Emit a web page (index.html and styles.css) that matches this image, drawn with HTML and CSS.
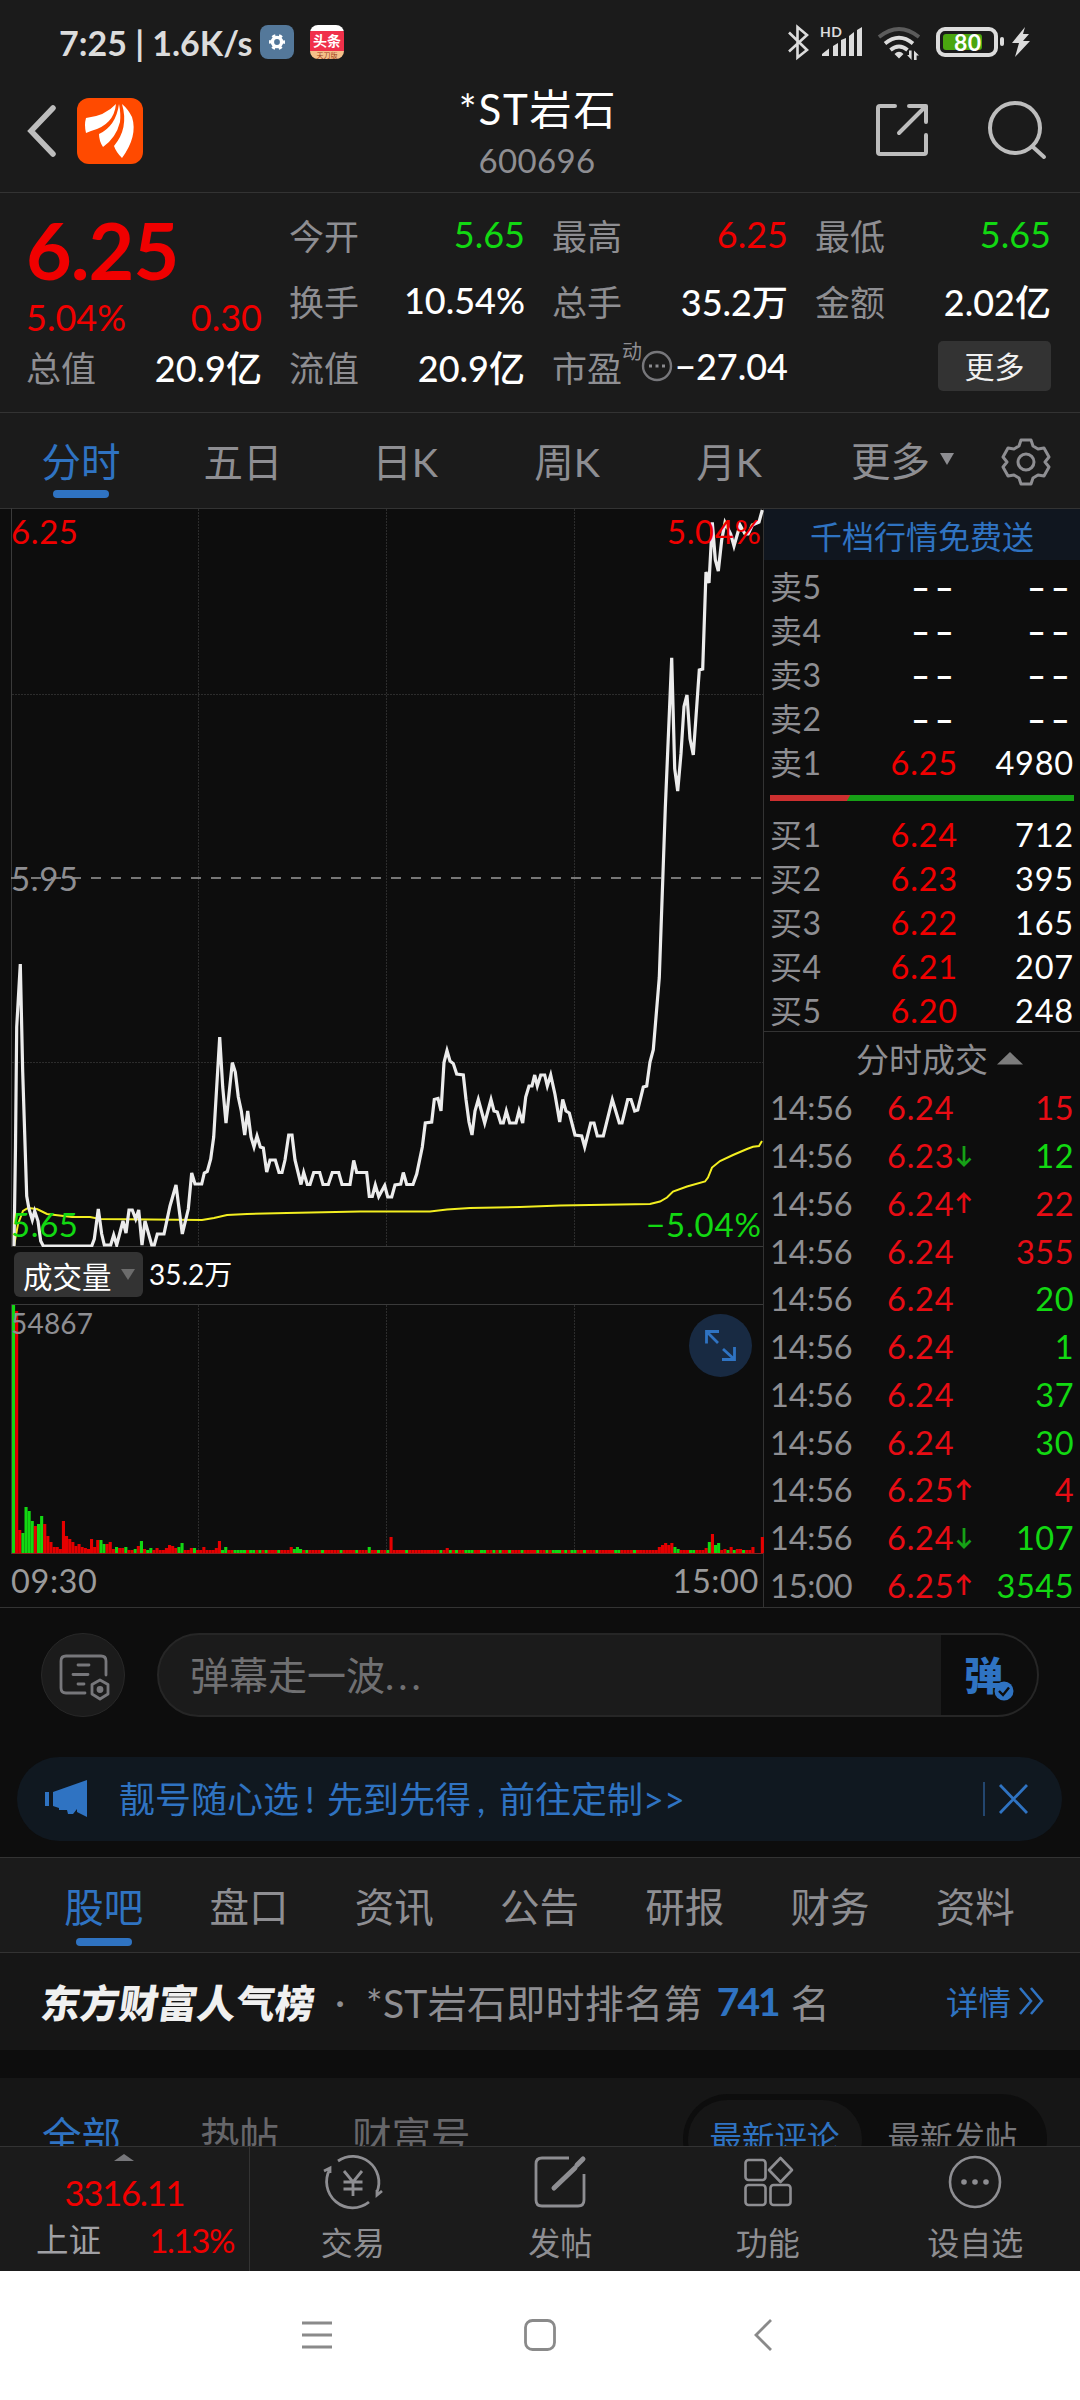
FILE: index.html
```
<!DOCTYPE html>
<html lang="zh-CN">
<head>
    <meta charset="UTF-8">
    <meta name="viewport" content="width=device-width, initial-scale=1.0">
    <title>*ST岩石 600696</title>

    <link rel="stylesheet" href="styles.css">
</head>
<body>

    <!-- 状态栏 -->
    <div class="status">
        <span class="status-text">7:25 | 1.6K/s</span>
        <svg class="app-gear" width="34" height="34" viewBox="0 0 34 34">
            <rect width="34" height="34" rx="8" fill="#54789a"/>
            <circle cx="17" cy="17" r="4.6" fill="none" stroke="#fff" stroke-width="3.4"/>
            <circle cx="17" cy="17" r="6.8" fill="none" stroke="#fff" stroke-width="2.4" stroke-dasharray="3.4 3.72" stroke-dashoffset="1.7"/>
        </svg>
        <div class="app-news"><b>头条</b><i>天刀版</i></div>
        <svg class="status-icons" width="250" height="40" viewBox="784 22 250 40">
            <path d="M789 32.5 L807 50 L797.5 57.5 V27 L807 35 L789 51.5" fill="none" stroke="#dcdcdc" stroke-width="2.6"/>
            <text class="hd" x="820" y="37" textLength="22">HD</text>
            <path d="M822 56 V54 L829 48.5 V56Z M833 56 V46 L838 43 V56Z M841 56 V40 L846 38 V56Z M849 56 V36 L854 32 V56Z M857 56 V30 L862 27 V56Z" fill="#dcdcdc"/>
            <g fill="none" stroke="#dcdcdc" stroke-width="3.8">
                <path d="M879 37 Q899 21 919 37" stroke="#5c5c5c"/>
                <path d="M885 43.5 Q899 32 913 43.5"/>
                <path d="M890.5 50 Q899 43 907.5 50"/>
            </g>
            <path d="M894.5 54 Q899 49.5 903.5 54 L899 58.5Z M909 50.5 h2.6 v9.5 l-4.5 -5 h1.9Z M914 60 v-9.5 l5 5 h-2.4 v4.5Z" fill="#dcdcdc"/>
            <rect x="938" y="29" width="58" height="26" rx="7" fill="none" stroke="#dcdcdc" stroke-width="4"/>
            <rect x="943" y="34" width="39" height="16" rx="3" fill="#4aa60f"/>
            <rect x="1000" y="37" width="4" height="9" rx="2" fill="#dcdcdc"/>
            <text class="battery" x="954" y="50.5" textLength="27">80</text>
            <path d="M1025 27 L1012 43 H1019 L1015 57 L1030 41 H1023 L1029 34 H1023Z" fill="#dcdcdc"/>
        </svg>
    </div>

    <!-- 标题栏 -->
    <div class="header">
        <svg class="back" width="32" height="54" viewBox="0 0 32 54"><path d="M27 4 L5 27 L27 50" fill="none" stroke="#bdbdbd" stroke-width="5.5" stroke-linecap="round"/></svg>
        <svg class="logo" width="66" height="66" viewBox="0 0 66 66">
            <rect width="66" height="66" rx="12" fill="#ff4a00"/>
            <path d="M9 20 Q28 18 39 6 Q37 27 14 33 L9 35 Q7 27 9 20Z" fill="#fff"/>
            <path d="M42 6 Q44 16 43 24 Q39 40 26 49 Q22 43 22 36 Q39 28 42 6Z" fill="#fff"/>
            <path d="M45 6 Q51 11 55 19 Q61 38 45 60 Q39 54 37 48 Q52 30 45 6Z" fill="#fff"/>
        </svg>
        <div class="title">
            <div class="name">*ST岩石</div>
            <div class="code">600696</div>
        </div>
        <svg class="head-icons" width="180" height="66" viewBox="870 98 180 66" fill="none" stroke="#bdbdbd" stroke-width="4" stroke-linecap="round" stroke-linejoin="round">
            <path d="M895 106 H880 Q878 106 878 108 V152 Q878 154 880 154 H924 Q926 154 926 152 V135 M909 106 H926 V122 M924 108 L899 133"/>
            <circle cx="1015" cy="128" r="25"/>
            <path d="M1033 147 L1044 157"/>
        </svg>
    </div>

    <!-- 报价 -->
    <div class="quote">
        <div class="col">
            <div class="price">6.25</div>
            <div class="cell change red"><span>5.04%</span><span>0.30</span></div>
            <div class="cell"><label>总值</label><b>20.9亿</b></div>
        </div>
        <div class="col">
            <div class="cell"><label>今开</label><span class="green">5.65</span></div>
            <div class="cell"><label>换手</label><b>10.54%</b></div>
            <div class="cell"><label>流值</label><b>20.9亿</b></div>
        </div>
        <div class="col">
            <div class="cell"><label>最高</label><span class="red">6.25</span></div>
            <div class="cell"><label>总手</label><b>35.2万</b></div>
            <div class="cell">
                <label>市盈<sup>动</sup></label>
                <svg class="tip" width="32" height="32" viewBox="0 0 32 32"><circle cx="16" cy="16" r="14" fill="none" stroke="#77777b" stroke-width="2.4"/><path d="M8 14.5h3v3h-3z M14.5 14.5h3v3h-3z M21 14.5h3v3h-3z" fill="#8a8a8e"/></svg>
                <b>−27.04</b>
            </div>
        </div>
        <div class="col">
            <div class="cell"><label>最低</label><span class="green">5.65</span></div>
            <div class="cell"><label>金额</label><b>2.02亿</b></div>
            <div class="cell"><a class="more-btn">更多</a></div>
        </div>
    </div>

    <!-- 周期切换 -->
    <div class="period">
        <div class="p-item active">分时</div>
        <div class="p-item">五日</div>
        <div class="p-item">日K</div>
        <div class="p-item">周K</div>
        <div class="p-item">月K</div>
        <div class="p-more">更多<svg width="14" height="12" viewBox="0 0 14 12"><path d="M0 0H14L7 12Z" fill="#8e8e92"/></svg></div>
        <svg class="p-gear" width="50" height="50" viewBox="0 0 50 50" fill="none" stroke="#8e8e92" stroke-width="3" stroke-linejoin="round">
            <path d="M20 3 H30 L32 9 L37 12 L43 11 L48 20 L44 25 L48 30 L43 39 L37 38 L32 41 L30 47 H20 L18 41 L13 38 L7 39 L2 30 L6 25 L2 20 L7 11 L13 12 L18 9Z"/>
            <circle cx="25" cy="25" r="8"/>
        </svg>
    </div>

    <div class="main">
        <!-- 分时图 -->
        <div class="chart">
            <svg class="price-chart" width="764" height="739" viewBox="0 508 764 739">
                <path class="frame" d="M11.5 508V1246.5H763"/>
                <path class="grid" d="M198.5 509V1246 M386.5 509V1246 M574.5 509V1246 M12 694.5H763 M12 1062.5H763"/>
                <path class="middle" d="M11 878H763"/>
                <polyline class="avg" points="14,1246 18,1224 23,1211 28,1208 37,1209 47,1214 72,1217 90,1217 100,1219 202,1220 214,1218 227,1215 247,1214 287,1213 360,1211.5 430,1211.5 447,1209.5 470,1208 520,1207 560,1205.5 650,1204 660,1201.5 667,1197.5 673,1191.5 687,1186.5 705,1181.5 708,1177.5 712,1167.6 720,1161 733,1155 747,1149 753,1146.7 759,1146 762,1141"/>
                <polyline class="line" points="14,1246 15.5,1147 16.7,1027 20.3,964 22.7,1072 26.7,1196 29,1209 32.3,1220 34.7,1211 38,1221 40.7,1241 43.3,1246 91.7,1246 94.3,1239 98.3,1209 101.7,1234 104.3,1245 110.7,1245 113.7,1235 116.7,1245 123,1221 126,1233 129,1210 132.3,1210 135.7,1219 138.7,1210 142,1245 145,1221 151.7,1245 154.3,1245 157.3,1234 164,1234 170,1206 176,1185 182.3,1234 188.3,1209 191.7,1173 195,1184 201.7,1184 204.3,1173 207.3,1171.5 210.7,1159 213.7,1137 216.7,1087 219.7,1037 222.7,1087 226,1123 232.3,1062.6 235.3,1072 238.3,1097 241.3,1111 244.7,1135 247.7,1111 251,1137 254,1147 257,1136 260.3,1147 263.3,1148 266.7,1172 270,1160 275.3,1160 279,1172.5 282,1172.5 285,1160 288.7,1135 292,1135 295,1160 301,1184.5 303.7,1172.5 307.3,1184.5 310,1184.5 313.7,1172.5 319.7,1172.5 323,1184.5 328.3,1184.5 332.3,1172.5 338.7,1172.5 342,1184.5 350,1184.5 353.7,1160.5 356.7,1172.5 366.7,1172.5 369.3,1196.5 372.3,1196.5 375.3,1185 378.7,1196.5 384.7,1185.5 387.7,1197 391.7,1197 395,1185 400.7,1184 403.3,1172.5 406.7,1184.5 413,1184.5 416.7,1174 422.3,1147 425.3,1123 431.7,1122 434.3,1099.5 438,1098.5 441,1111 444,1062.6 447,1050.7 450,1061 453.3,1063.6 456.7,1074 463.3,1075 466,1099.5 469,1122 472,1135 475,1111 478.3,1099.5 484.7,1123 491,1099.5 494,1111 497.3,1112 500.7,1123 503.3,1123 506.3,1111 509.7,1123 516,1123 519,1111 522.7,1123 525.7,1097 529,1086 532,1086 534.7,1075 537.3,1086 540.7,1075 544.7,1075 547.3,1086 550.7,1075 555,1094.5 559.7,1122 562.7,1099.5 566,1111 569.3,1113 575,1135 581.7,1136 584.7,1147 590.7,1123 594,1123 597.3,1136 603.3,1136 612.3,1099.5 619.3,1123 622,1123 627.7,1099.5 631,1099.5 634.7,1111 637.7,1110 643.3,1087 646.7,1086 650,1062 653.3,1049.7 659.3,977.5 665.3,808 671.7,657.7 674.7,768.6 677.7,791 681,753.7 684,706.4 687,695 690,738.8 693.3,755 699.3,670 702.7,669 706,572 709,583 712.3,522.4 715.3,559.7 718.3,571 721.7,540 725,522.4 730.7,534 734,546 740,525 745,534 748.3,534 752.3,525 759,522 762.3,510"/>
                <text class="red" x="11" y="543.5" textLength="67">6.25</text>
                <text class="red" x="667" y="543.5" textLength="94">5.04%</text>
                <text class="gray" x="11" y="890.5" textLength="67">5.95</text>
                <text class="green" x="11" y="1237" textLength="67">5.65</text>
                <text class="green" x="646" y="1237" textLength="115">−5.04%</text>
            </svg>
            <div class="vol-bar">
                <div class="vol-select">成交量<svg width="14" height="11" viewBox="0 0 14 11"><path d="M0 0H14L7 11Z" fill="#6c6c6c"/></svg></div>
                <span>35.2万</span>
            </div>
            <svg class="vol-chart" width="764" height="250" viewBox="0 1304 764 250">
                <path class="frame" d="M11.5 1554V1304.5H763"/>
                <path class="grid" d="M198.5 1305V1553 M386.5 1305V1553 M574.5 1305V1553"/>
                <g id="bars"></g>
                <path d="M12 1553.5H763" stroke="#8c2020"/>
                <text class="gray small" x="11" y="1333.5" textLength="82">54867</text>
                <circle cx="720.5" cy="1345.5" r="31.5" fill="#182a42"/>
                <path d="M718 1343 L707 1332 M706.5 1343.5 V1331.5 H719 M723 1349 L734 1359 M722 1359.5 H734.5 V1347" fill="none" stroke="#2f73c2" stroke-width="2.8"/>
            </svg>
            <div class="times"><span>09:30</span><span>15:00</span></div>
        </div>

        <!-- 盘口 -->
        <div class="side">
            <div class="promo">千档行情免费送</div>
            <div class="book">
                <div class="row"><label>卖5</label><span class="dash">--</span><b class="dash">--</b></div>
                <div class="row"><label>卖4</label><span class="dash">--</span><b class="dash">--</b></div>
                <div class="row"><label>卖3</label><span class="dash">--</span><b class="dash">--</b></div>
                <div class="row"><label>卖2</label><span class="dash">--</span><b class="dash">--</b></div>
                <div class="row"><label>卖1</label><span>6.25</span><b>4980</b></div>
            </div>
            <div class="ratio"></div>
            <div class="book buy">
                <div class="row"><label>买1</label><span>6.24</span><b>712</b></div>
                <div class="row"><label>买2</label><span>6.23</span><b>395</b></div>
                <div class="row"><label>买3</label><span>6.22</span><b>165</b></div>
                <div class="row"><label>买4</label><span>6.21</span><b>207</b></div>
                <div class="row"><label>买5</label><span>6.20</span><b>248</b></div>
            </div>
            <div class="tick-title">分时成交<svg width="26" height="13" viewBox="0 0 26 13"><path d="M0 12.5L13 0L26 12.5Z" fill="#7c7c7c"/></svg></div>
            <div class="ticks" id="ticks"></div>
        </div>
    </div>

    <!-- 弹幕 -->
    <div class="danmu">
        <div class="dm-set">
            <svg width="84" height="84" viewBox="0 0 84 84" fill="none" stroke="#77777b" stroke-width="2.8" stroke-linecap="round">
                <path d="M43 59 H24 Q19 59 19 54 V27 Q19 22 24 22 H59 Q64 22 64 27 V41 M36 31 H47 M31 40.5 H46 M36 50 H42"/>
                <path d="M58 46 L66 50.5 V60 L58 65 L50 60 V50.5Z" stroke-linejoin="round"/>
                <circle cx="58" cy="55.5" r="2" fill="#77777b"/>
            </svg>
        </div>
        <div class="dm-input">
            <span>弹幕走一波<i>...</i></span>
            <div class="dm-switch"><b>弹</b><svg class="dm-check" width="20" height="20" viewBox="0 0 20 20"><circle cx="10" cy="10" r="9.5" fill="#2f73c2"/><path d="M5 10L9 14L15 6.5" fill="none" stroke="#0d0d0d" stroke-width="2.4"/></svg></div>
        </div>
    </div>

    <div class="notice">
        <svg width="42" height="38" viewBox="0 0 42 38" fill="#2f73c2"><path d="M0 12h4v14H0z M8 12 L42 0 V37 L32 32 V29 L28 34 H23 L22 30 H14 V28 L8 26Z"/></svg>
        <span class="notice-text">靓号随心选<i>!</i>先到先得<i>,</i>前往定制&gt;&gt;</span>
        <svg class="close" width="46" height="36" viewBox="0 0 46 36"><path d="M1 1V35" stroke="#2a568a" stroke-width="1.5"/><path d="M17 4L44 32M44 4L17 32" stroke="#2f73c2" stroke-width="2.8"/></svg>
    </div>

    <!-- 资讯栏目 -->
    <div class="tabs">
        <div class="tab active">股吧</div>
        <div class="tab">盘口</div>
        <div class="tab">资讯</div>
        <div class="tab">公告</div>
        <div class="tab">研报</div>
        <div class="tab">财务</div>
        <div class="tab">资料</div>
    </div>

    <div class="rank">
        <span class="rank-logo">东方财富人气榜</span>
        <span class="dot">·</span>
        <span class="rank-text">*ST岩石即时排名第</span>
        <b>741</b>
        <span>名</span>
        <span class="detail">详情<svg width="26" height="30" viewBox="0 0 26 30"><path d="M2 2L13 15L2 28M13 2L24 15L13 28" fill="none" stroke="#2f73c2" stroke-width="2.6"/></svg></span>
    </div>

    <div class="posts">
        <span class="active">全部</span>
        <span>热帖</span>
        <span>财富号</span>
        <div class="sort"><div class="on">最新评论</div><div>最新发帖</div></div>
    </div>

    <!-- 底部工具栏 -->
    <div class="toolbar">
        <div class="index">
            <svg width="20" height="7" viewBox="0 0 20 7"><path d="M0 7L10 0L20 7Z" fill="#77777b"/></svg>
            <div class="index-num">3316.11</div>
            <div class="index-row"><span>上证</span><b>1.13%</b></div>
        </div>
        <div class="tool">
            <svg width="60" height="56" viewBox="0 0 60 56" fill="none" stroke="#8e8e92" stroke-width="2.8">
                <path d="M15 7 A26 26 0 0 1 54 38 M46 48 A26 26 0 0 1 7 15 M1 17L7 14V19 M59 37L54 41V36"/>
                <path d="M21 17L30 28L39 17M30 28V42M20.5 28H39.5M20.5 35H39.5"/>
            </svg>
            交易
        </div>
        <div class="tool">
            <svg width="60" height="56" viewBox="0 0 60 56" fill="none" stroke="#8e8e92" stroke-width="2.8">
                <path d="M39 4H12Q6 4 6 10V46Q6 52 12 52H48Q54 52 54 46V20" />
                <path d="M53 5L47 11M45 14L24 34" stroke-width="5" stroke-linecap="round"/>
            </svg>
            发帖
        </div>
        <div class="tool">
            <svg width="60" height="56" viewBox="0 0 60 56" fill="none" stroke="#8e8e92" stroke-width="2.6">
                <rect x="7.5" y="6" width="20" height="20" rx="3"/><rect x="7.5" y="31" width="20" height="20" rx="3"/><rect x="32.5" y="31" width="20" height="20" rx="3"/>
                <path d="M42.5 4L54 16L42.5 28L31 16Z" stroke-linejoin="round"/>
            </svg>
            功能
        </div>
        <div class="tool">
            <svg width="60" height="56" viewBox="0 0 60 56"><circle cx="30" cy="28" r="25" fill="none" stroke="#8e8e92" stroke-width="2.6"/><g fill="#8e8e92"><circle cx="19" cy="28" r="2.8"/><circle cx="30" cy="28" r="2.8"/><circle cx="41" cy="28" r="2.8"/></g></svg>
            设自选
        </div>
    </div>

    <!-- 系统导航 -->
    <div class="sysnav">
        <svg width="34" height="34" viewBox="0 0 34 34"><path d="M2 5H32M2 17H32M2 29H32" stroke="#8a8a8a" stroke-width="2.8"/></svg>
        <svg width="34" height="34" viewBox="0 0 34 34"><rect x="2.5" y="2.5" width="29" height="29" rx="7" fill="none" stroke="#8a8a8a" stroke-width="2.8"/></svg>
        <svg width="34" height="34" viewBox="0 0 34 34"><path d="M25 2L10 17L25 32" fill="none" stroke="#8a8a8a" stroke-width="2.8"/></svg>
    </div>

    <script src="script.js"></script>
</body>
</html>
```
FILE: styles.css
```
/*初始化*/
*{
    box-sizing: border-box;
}
body{
    margin: 0;
    width: 1080px;
    height: 2400px;
    overflow: hidden;
    background: #0d0d0d;
    color: #8e8e92;
    font-family: Lato, "Noto Sans CJK SC", sans-serif;
    font-size: 35px;
}
svg{
    display: block;
    flex: none;
}
b{
    font-weight: 400;
    color: #fff;
}
i{
    font-style: normal;
}
.red{
    color: #f00000;
    fill: #f00000;
}
.green{
    color: #12d812;
    fill: #12d812;
}
.gray{
    fill: #8e8e92;
}

/*状态栏*/
.status{
    display: flex;
    align-items: center;
    height: 84px;
    padding-left: 59px;
    background: #1b1b1b;
}
.status-text{
    width: 201px;
    font-size: 34px;
    font-weight: 700;
    color: #dcdcdc;
    white-space: nowrap;
}
.app-news{
    width: 34px;
    height: 34px;
    margin-left: 16px;
    border-radius: 8px;
    overflow: hidden;
    background: linear-gradient(#fff 6px, #f0304a 6px, #f0304a 26px, #f5c08a 26px);
    text-align: center;
}
.app-news b{
    display: block;
    margin-top: 6px;
    font-size: 14px;
    font-weight: 700;
    line-height: 20px;
}
.app-news i{
    display: block;
    font-size: 7px;
    line-height: 8px;
    color: #a04020;
}
.status-icons{
    margin-left: 440px;
}
.hd{
    font-size: 14px;
    font-weight: 700;
    fill: #dcdcdc;
}
.battery{
    font-size: 23px;
    font-weight: 700;
    fill: #fff;
}

/*标题栏*/
.header{
    display: flex;
    height: 109px;
    background: #1b1b1b;
    border-bottom: 1px solid #333;
}
.back{
    margin: 20px 0 0 26px;
}
.logo{
    margin: 14px 0 0 19px;
}
.title{
    width: 190px;
    margin-left: 299px;
    text-align: center;
}
.name{
    margin-left: 2px;
    font-size: 42px;
    line-height: 50px;
    color: #fff;
    letter-spacing: 1.8px;
    white-space: nowrap;
}
.code{
    font-size: 33px;
    line-height: 53px;
    letter-spacing: 0.4px;
}
.head-icons{
    margin: 14px 0 0 238px;
}

/*报价*/
.quote{
    display: grid;
    grid-template-columns: repeat(4, 235px);
    column-gap: 28px;
    height: 220px;
    padding: 8px 28px 0 26px;
    background: #1b1b1b;
    border-bottom: 1px solid #333;
}
.cell{
    display: flex;
    justify-content: space-between;
    align-items: center;
    height: 66px;
    white-space: nowrap;
}
.cell span,.cell b{
    margin-right: -1px;
    font-size: 36px;
}
.cell b{
    font-weight: 500;
}
.cell .tip{
    margin-left: -4px;
}
.price{
    height: 90px;
    margin-bottom: -8px;
    font-size: 79px;
    font-weight: 700;
    line-height: 97px;
    letter-spacing: -1px;
    color: #f00000;
}
.cell.change{
    height: 50px;
    margin-top: 8px;
    margin-bottom: -8px;
    padding-top: 2px;
}
.cell sup{
    font-size: 20px;
    line-height: 0;
    vertical-align: 23px;
}
.more-btn{
    width: 113px;
    height: 50px;
    margin: 0 -1px 0 auto;
    border-radius: 5px;
    background: #333;
    color: #f0f0f0;
    font-size: 30px;
    line-height: 50px;
    text-align: center;
}

/*周期切换*/
.period{
    display: flex;
    height: 96px;
    background: #1b1b1b;
    border-bottom: 1px solid #333;
    font-size: 39.5px;
    line-height: 97px;
}
.p-item{
    position: relative;
    width: 162px;
    text-align: center;
}
.active{
    color: #2f73c2;
}
.p-item.active::after,.tab.active::after{
    content: "";
    position: absolute;
    left: 50%;
    bottom: 10px;
    width: 56px;
    height: 8px;
    margin-left: -28px;
    border-radius: 4px;
    background: #2f73c2;
}
.p-more{
    display: flex;
    align-items: center;
    width: 150px;
    padding-left: 41px;
}
.p-more svg{
    margin: 0 0 4px 10px;
}
.p-gear{
    margin: 24px 0 0 41px;
}

/*分时图*/
.main{
    display: flex;
    height: 1099px;
    border-bottom: 1px solid #333;
}
.chart{
    width: 764px;
    border-right: 1px solid #333;
}
.price-chart{
    margin-top: -1px;
}
.frame{
    fill: none;
    stroke: #3a3a3a;
}
.grid{
    stroke: #2c2c2c;
    stroke-dasharray: 2 1;
}
.middle{
    stroke: #9a9a9a;
    stroke-width: 1.6;
    stroke-dasharray: 10 10;
}
.avg{
    fill: none;
    stroke: #f2ee20;
    stroke-width: 2;
}
.line{
    fill: none;
    stroke: #ececec;
    stroke-width: 3.2;
}
.chart text{
    font-size: 33px;
}
.chart text.small{
    font-size: 28px;
}
.vol-bar{
    display: flex;
    align-items: center;
    height: 57px;
    padding: 0 0 2px 14px;
    font-size: 28px;
    color: #fff;
}
.vol-bar > span{
    padding-bottom: 4px;
}
.vol-select{
    display: flex;
    align-items: center;
    width: 129px;
    height: 45px;
    margin-right: 6px;
    padding-left: 9px;
    border-radius: 6px;
    background: #333;
    font-size: 29.5px;
}
.vol-select svg{
    margin-left: 9px;
}
.times{
    display: flex;
    justify-content: space-between;
    padding: 0 4px 0 11px;
    font-size: 32.5px;
    line-height: 54px;
    color: #9a9a9a;
    letter-spacing: 0.6px;
}

/*盘口*/
.side{
    width: 316px;
}
.promo{
    height: 51px;
    background: #10161f;
    color: #2f73c2;
    font-size: 32px;
    line-height: 55px;
    text-align: center;
}
.book{
    padding: 5px 6px 0 6px;
}
.row{
    display: grid;
    grid-template-columns: 91px 97px 1fr;
    align-items: center;
    height: 44px;
    font-size: 32.5px;
    line-height: 44px;
}
.row label{
    font-size: 32px;
    letter-spacing: 0.6px;
}
.row span{
    color: #f00000;
    letter-spacing: 0.8px;
    text-align: right;
}
.row b{
    letter-spacing: 0.8px;
    text-align: right;
}
.row .dash{
    color: #fff;
    font-size: 40px;
    letter-spacing: 3px;
    transform: scaleX(1.32);
    transform-origin: right;
}
.ratio{
    height: 6px;
    margin: 10px 6px 0;
    background: linear-gradient(120deg, #cc2f2f 69px, #16a016 70px);
}
.buy{
    height: 231px;
    padding-top: 12px;
    border-bottom: 1px solid #333;
}
.tick-title{
    display: flex;
    align-items: center;
    height: 52px;
    padding-left: 92px;
    font-size: 33px;
}
.tick-title svg{
    margin-left: 9px;
}
.tick{
    display: flex;
    align-items: center;
    height: 47.75px;
    padding: 0 6px 0 6px;
    font-size: 32.5px;
    color: #8e8e92;
}
.tick span{
    letter-spacing: 0.8px;
}
.tick .t{
    width: 117px;
    letter-spacing: -0.2px;
}
.tick .p{
    width: 69px;
    color: #e80c14;
}
.tick .n{
    flex: 1;
    text-align: right;
    letter-spacing: 0.5px;
}
.tick .up{
    color: #e80c14;
}
.tick .down{
    color: #12d812;
}

/*弹幕*/
.danmu{
    display: flex;
    height: 149px;
    padding: 25px 0 0 41px;
}
.dm-set{
    width: 84px;
    height: 84px;
    border: 1px solid #282828;
    border-radius: 50%;
    background: #1b1b1b;
}
.dm-input{
    display: flex;
    width: 882px;
    height: 84px;
    margin-left: 32px;
    border: 2px solid #262626;
    border-radius: 42px;
    overflow: hidden;
    background: #1b1b1b;
    color: #707072;
    font-size: 39px;
    line-height: 80px;
}
.dm-input span{
    width: 782px;
    padding-left: 31px;
}
.dm-input i{
    letter-spacing: 4px;
}
.dm-switch{
    position: relative;
    flex: 1;
    padding-left: 23px;
    background: #0d0d0d;
}
.dm-switch b{
    color: #2f73c2;
    font-weight: 900;
}
.dm-check{
    position: absolute;
    left: 53px;
    top: 46px;
}
.notice{
    display: flex;
    align-items: center;
    height: 84px;
    margin: 0 18px 16px 17px;
    padding: 0 33px 0 28px;
    border-radius: 42px;
    background: #101820;
    color: #2f73c2;
}
.notice-text{
    margin-left: 32px;
    font-size: 36px;
    line-height: 84px;
    white-space: nowrap;
}
.notice-text i{
    display: inline-block;
    width: 28px;
    padding-left: 6px;
}
.close{
    margin-left: auto;
}

/*资讯栏目*/
.tabs{
    display: flex;
    height: 96px;
    padding: 0 32px 0 31px;
    border-top: 1px solid #333;
    border-bottom: 1px solid #333;
    background: #1b1b1b;
    font-size: 39.5px;
    line-height: 97px;
}
.tab{
    position: relative;
    flex: 1;
    text-align: center;
}
.tab.active::after{
    bottom: 6px;
}
.rank{
    display: flex;
    align-items: center;
    height: 97px;
    padding: 0 36px 2px 42px;
    background: #161616;
    font-size: 39px;
    white-space: nowrap;
}
.rank-logo{
    width: 272px;
    color: #f0f0f0;
    font-size: 39px;
    font-weight: 900;
    transform: skewX(-8deg);
}
.dot{
    width: 52px;
    text-align: center;
}
.rank-text{
    letter-spacing: 0.3px;
}
.rank b{
    margin: 0 12px 0 14px;
    color: #2f73c2;
    font-weight: 700;
    font-size: 39px;
    letter-spacing: -2px;
}
.detail{
    display: flex;
    align-items: center;
    margin-left: auto;
    color: #2f73c2;
    font-size: 32.5px;
}
.detail svg{
    margin-left: 7px;
}
.posts{
    display: flex;
    height: 68px;
    margin-top: 28px;
    padding-left: 42px;
    overflow: hidden;
    background: #161616;
    color: #66666a;
    font-size: 39.5px;
    line-height: 115px;
}
.posts span{
    margin-right: 79px;
}
.posts span:nth-child(2){
    margin-right: 73px;
}
.posts .active,.posts .on{
    color: #2f73c2;
}
.sort{
    display: flex;
    width: 364px;
    height: 90px;
    margin: 16px 0 0 133px;
    padding: 6px 5px;
    border-radius: 45px;
    background: #0d0d0d;
    font-size: 32.5px;
    line-height: 75px;
    color: #77777b;
    text-align: center;
    flex: none;
}
.sort div{
    width: 174px;
    height: 78px;
}
.sort div:last-child{
    width: 178px;
    padding-left: 4px;
}
.sort .on{
    border-radius: 39px;
    background: #161616;
}

/*底部工具栏*/
.toolbar{
    display: flex;
    height: 125px;
    border-top: 1px solid #333;
    background: #1b1b1b;
}
.index{
    width: 250px;
    border-right: 1px solid #333;
    color: #f00000;
}
.index svg{
    margin: 7px 0 0 114px;
}
.index-num{
    font-size: 34.5px;
    line-height: 46px;
    margin-top: 9px;
    text-align: center;
    letter-spacing: -1.2px;
}
.index-row{
    display: flex;
    justify-content: space-between;
    padding: 1px 15px 0 36px;
    font-size: 33px;
    line-height: 46px;
}
.index-row span{
    color: #a0a0a4;
    font-size: 32.5px;
}
.index-row b{
    color: #f00000;
    letter-spacing: -1.4px;
}
.tool{
    display: flex;
    flex: 1;
    flex-direction: column;
    align-items: center;
    padding: 7px 2px 0 0;
    font-size: 32px;
    line-height: 65px;
}

/*系统导航*/
.sysnav{
    display: flex;
    gap: 189px;
    height: 130px;
    padding: 47px 0 0 300px;
    background: #fff;
}
```
FILE: script.js
```
// 成交量: 高度(px), 负数为绿色
var bars = {
    0: -248, 1: 242, 2: 23, 3: -20, 4: -46, 5: -42, 6: -32, 7: 27, 8: -29, 9: -37,
    10: 29, 11: 17, 12: 11, 13: 6, 14: 6, 15: 4, 16: 32, 17: 17, 18: 14, 19: 11,
    20: 7, 21: 9, 22: 6, 23: 5, 24: 4, 25: 14, 26: 6, 27: 13, 28: -13, 29: -9,
    30: 9, 31: 11, 32: 4, 33: -6, 34: 5, 35: 5, 36: -6, 39: -4, 40: 7, 41: -12,
    42: 4, 43: -3, 44: -5, 46: 5, 49: 5, 50: 8, 51: 7, 52: 5, 53: -6, 54: -10,
    57: 5, 58: -5, 61: 6, 65: 5, 66: 12, 67: -3, 68: -6, 71: -3, 72: -3, 73: -3,
    74: -3, 76: -3, 77: -3, 79: -3, 81: -3, 85: -3, 89: 6, 90: -4, 91: -6, 92: -4,
    94: -3, 99: -3, 105: -3, 110: -3, 114: -6, 117: -3, 120: -3, 121: 16, 126: -3,
    137: -3, 139: 5, 140: -3, 142: -3, 145: -3, 146: -3, 147: -3, 150: -3, 151: -3,
    154: -3, 156: -3, 159: -3, 163: -3, 168: -3, 171: -3, 173: -3, 174: -3, 175: -3,
    177: -3, 179: -3, 180: -3, 183: -3, 187: -3, 193: -3, 194: -3, 199: -3,
    207: 6, 208: 8, 209: 10, 210: 8, 211: 10, 212: -6, 213: -4, 217: -3, 218: -3,
    222: 5, 223: -11, 224: 19, 225: -8, 226: -10, 228: 4, 229: -3, 230: 6, 231: -3,
    232: 4, 233: 4, 234: -3, 237: 6, 238: 0, 239: 0, 240: 16
};
var html = "";
for (var i = 0; i <= 240; i++) {
    var h = i in bars ? bars[i] : 3;
    var x = 12 + i * 3.12;
    html += '<rect x="' + x.toFixed(1) + '" y="' + (1553 - Math.abs(h)) + '" width="3.1" height="' + Math.abs(h) +
        '" fill="' + (h < 0 ? "#12d812" : "#e60000") + '"/>';
}
document.getElementById("bars").innerHTML = html;

// 分时成交: 时间, 价格, 箭头, 手数, 方向
var ticks = [
    ["14:56", "6.24", "", 15, "up"],
    ["14:56", "6.23", "down", 12, "down"],
    ["14:56", "6.24", "up", 22, "up"],
    ["14:56", "6.24", "", 355, "up"],
    ["14:56", "6.24", "", 20, "down"],
    ["14:56", "6.24", "", 1, "down"],
    ["14:56", "6.24", "", 37, "down"],
    ["14:56", "6.24", "", 30, "down"],
    ["14:56", "6.25", "up", 4, "up"],
    ["14:56", "6.24", "down", 107, "down"],
    ["15:00", "6.25", "up", 3545, "down"]
];
var arrows = {
    "": "",
    up: '<svg width="16" height="22" viewBox="0 0 16 22"><path d="M8 21V2M1.5 8.5L8 2L14.5 8.5" fill="none" stroke="#e80c14" stroke-width="2.8"/></svg>',
    down: '<svg width="16" height="22" viewBox="0 0 16 22"><path d="M8 1V20M1.5 13.5L8 20L14.5 13.5" fill="none" stroke="#16a016" stroke-width="2.8"/></svg>'
};
document.getElementById("ticks").innerHTML = ticks.map(function (t) {
    return '<div class="tick"><span class="t">' + t[0] + '</span><span class="p">' + t[1] + '</span>' +
        arrows[t[2]] + '<span class="n ' + t[4] + '">' + t[3] + '</span></div>';
}).join("");
```
